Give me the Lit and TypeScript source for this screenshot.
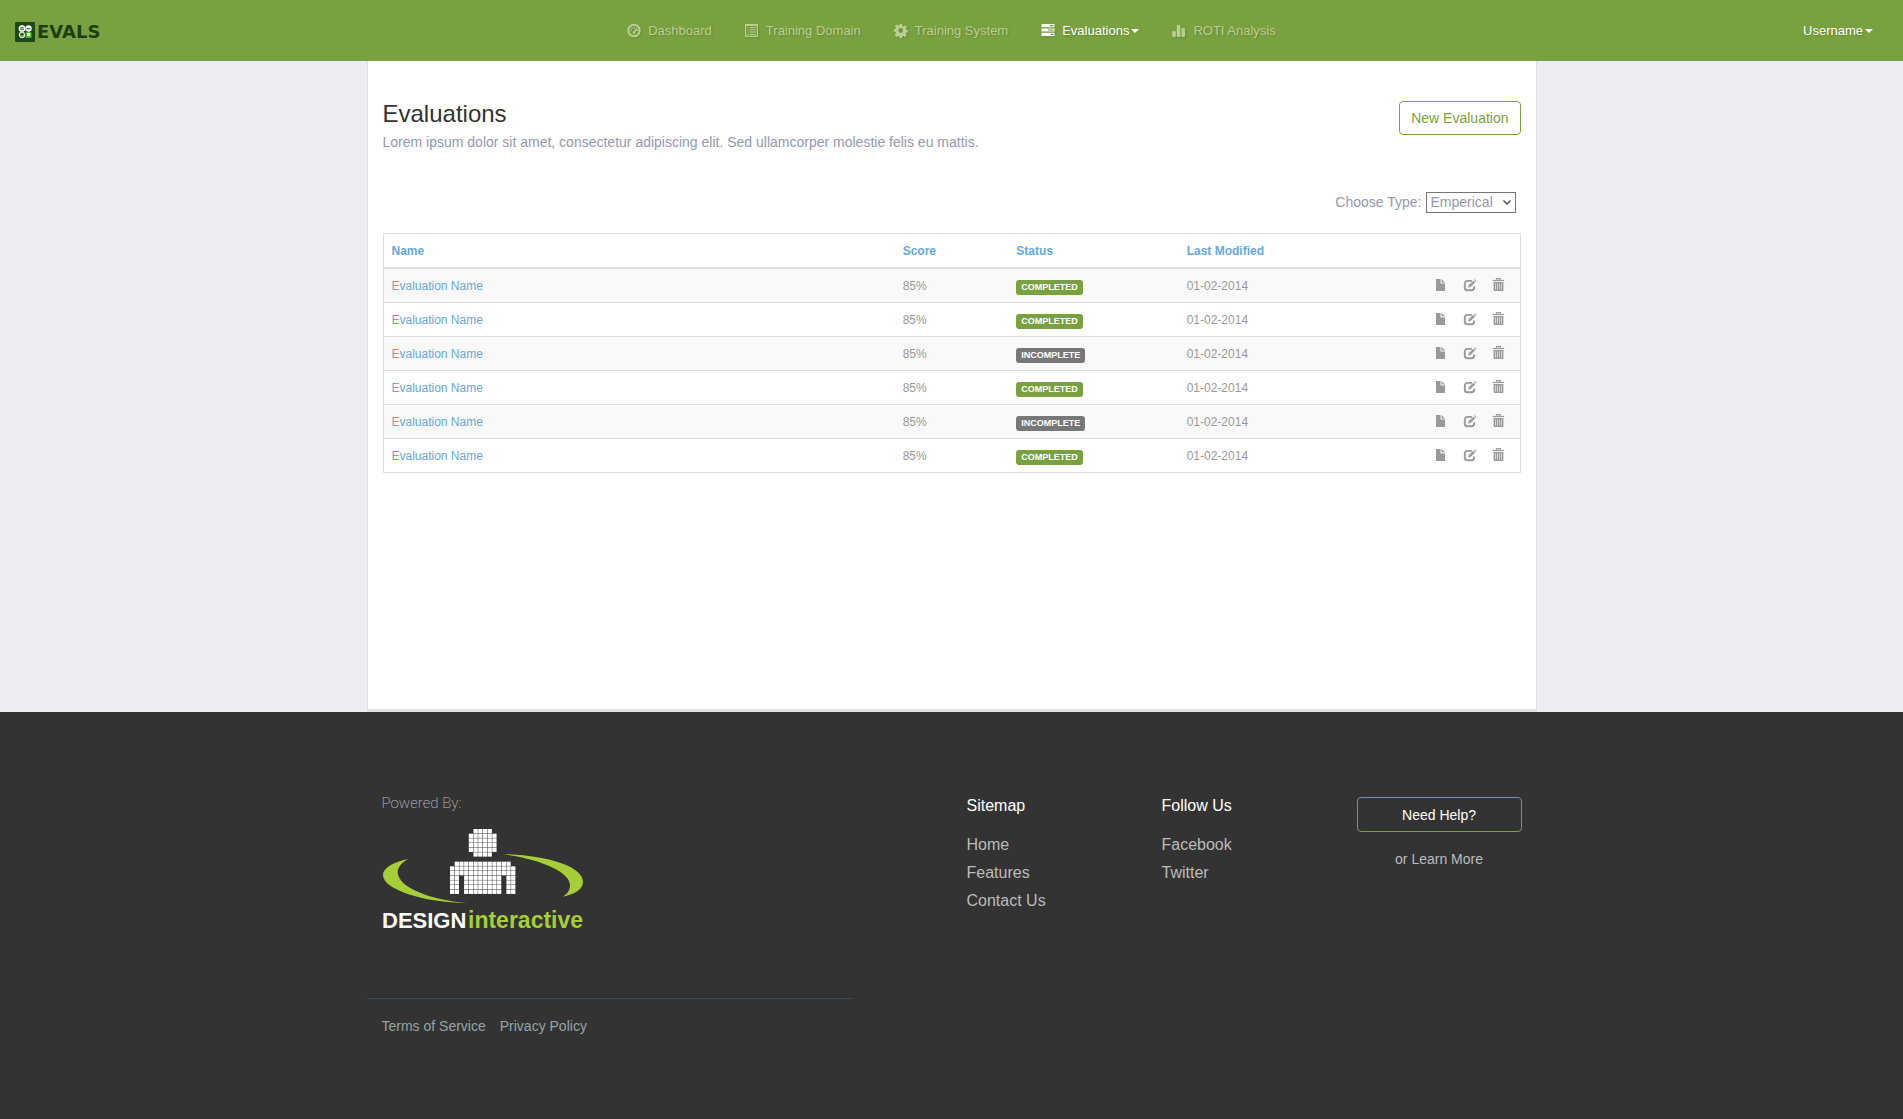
import { LitElement, html, css, svg } from "lit";
import { customElement } from "lit/decorators.js";

interface NavItem {
  label: string;
  icon: keyof typeof icons;
  active?: boolean;
}

interface Evaluation {
  name: string;
  score: string;
  complete: boolean;
  modified: string;
}

const icons = {
  dashboard: svg`
    <circle cx="7" cy="6.500" r="5.700" fill="none" stroke="currentColor" stroke-width="2" />
    <path d="M7.2 8.700 9.600 4.400" stroke="currentColor" stroke-width="1.200" fill="none" />
    <circle cx="7" cy="8.500" r="1.300" />
    <circle cx="3.900" cy="6.400" r=".8" /><circle cx="5" cy="4.200" r=".8" />
    <circle cx="7.400" cy="3.400" r=".8" /><circle cx="10.200" cy="6.400" r=".8" />`,
  list: svg`
    <path fill-rule="evenodd" d="M0 0h13v13H0zM1.200 2v9.800h10.600V2z" />
    <path d="M2.500 3h1v1h-1zM4.500 3H11v1H4.500zM2.500 5.300h1v1h-1zM4.500 5.300H11v1H4.500zM2.500 7.600h1v1h-1zM4.500 7.600H11v1H4.500zM2.500 9.900h1v1h-1zM4.500 9.900H11v1H4.500z" />`,
  cog: svg`
    <path fill-rule="evenodd" d="M5.600 0h2.400l.4 1.900 1.100.5 1.700-1.100 1.600 1.700-1.100 1.600.5 1.100 1.600.4v2.200l-1.800.4-.5 1.100 1.100 1.700-1.600 1.600-1.600-1.100-1.100.5-.4 1.800H5.600l-.4-1.800-1.100-.5-1.700 1.100L.9 10.500 2 8.900 1.500 7.800-.2 7.400V5.200l1.700-.4L2 3.700.9 2 2.400.5l1.700 1.100L5.200 1.300zM6.800 4.100a2.400 2.400 0 1 0 0 4.800 2.400 2.400 0 0 0 0-4.800z" />`,
  tasks: svg`
    <path fill-rule="evenodd" d="M.5 0h13v3.200H.5zM8.800 1v1.200h3.700V1zM.5 4.400h13v3.200H.5zM7 5.400v1.200h5.500V5.400zM.5 8.800h13V12H.5zM9.800 9.800V11h2.700V9.800z" />`,
  stats: svg`
    <rect x=".2" y="7" width="3.600" height="6" rx="1" />
    <rect x="4.800" y="1" width="3.600" height="12" rx="1" />
    <rect x="9.400" y="4" width="3.600" height="9" rx="1" />`,
  file: svg`<path d="M2 1h4.500v4.500H11V13H2zM7.500 1 11 4.500H7.500z" />`,
  edit: svg`
    <path d="M9 2.900H4.500A2.700 2.700 0 0 0 1.800 5.600v4A2.700 2.700 0 0 0 4.500 12.200h4a2.700 2.700 0 0 0 2.700-2.700V8.600" fill="none" stroke="currentColor" stroke-width="1.900" />
    <path d="M5.200 9.700 5.700 7.300 10.300 2.700 12.100 4.500 7.500 9.100zM11 2l.8-.8 1.800 1.800-.8.8z" />`,
  trash: svg`
    <path d="M4.500 1.800V.6h4v1.200" fill="none" stroke="currentColor" stroke-width="1.100" />
    <path d="M.8 1.900h11.400v1.200H.8z" />
    <path fill-rule="evenodd" d="M1.600 4h9.800v8a1 1 0 0 1-1 1H2.600a1 1 0 0 1-1-1zM3.200 5.200v6.600h.6V5.200zM5.300 5.200v6.600h.6V5.200zM7.300 5.200v6.600h.6V5.200zM9.300 5.200v6.600h.6V5.200z" />`,
};

const icon = (name: keyof typeof icons) => html`
  <svg class="icon" viewBox="0 0 14 14" width="14" height="14" fill="currentColor" aria-hidden="true">${icons[name]}</svg>
`;

/* Filled cells of the pixel figure, one string per row. */
const head = ["     ####     ", "    ######    ", "    ######    ", "    ######    ", "    ######    ", "     ####     "];
const body = [
  " ############ ",
  "##############",
  "##############",
  "## ######## ##",
  "## ######## ##",
  "## ######## ##",
  "## ######## ##",
];

const cells = (rows: string[], top: number) =>
  rows.flatMap((row, r) =>
    [...row].map((cell, c) =>
      cell === "#"
        ? svg`<rect x=${204 + c * 14.1} y=${top + r * 14} width="12.800" height="12.800" />`
        : null
    )
  );

@customElement("app-root")
export class AppRoot extends LitElement {
  static styles = css`
    :host {
      display: flex;
      flex-direction: column;
      min-height: 100vh;
      background: #ebedf2;
      color: #9499b0;
      font: 14px/20px "Liberation Sans", Arial, sans-serif;
    }
    * { box-sizing: border-box; }
    a { color: inherit; text-decoration: none; }
    h1, h2, p, ul { margin: 0; padding: 0; font-weight: 400; }
    ul { list-style: none; }
    .icon { display: block; overflow: visible; flex: none; }

    .topbar {
      display: grid;
      grid-template-columns: 1fr auto 1fr;
      align-items: center;
      min-height: 61px;
      padding: 0 15px;
      background: #7aa140;
      color: #b9d093;
      font-size: 13px;
      text-shadow: 1px 1px 2px rgba(0, 0, 0, 0.2);
    }
    .brand { justify-self: start; display: block; padding-top: 3px; text-shadow: none; }
    .brand svg { display: block; }
    .brand text { font: 700 18px "DejaVu Sans", sans-serif; fill: #1e3f14; }
    .nav { display: flex; gap: 33px; }
    .nav a, .user { display: flex; align-items: center; }
    .nav .icon { margin-right: 7px; filter: drop-shadow(1px 1px 1px rgba(0, 0, 0, 0.15)); }
    .active, .user { color: #fff; }
    .user { justify-self: end; padding: 0 15px; border: 0; background: none; font: inherit; text-shadow: inherit; }
    .caret { margin-left: 2px; border: 4px solid transparent; border-top-color: currentColor; border-bottom: 0; }

    .container { width: 100%; max-width: 1170px; margin: 0 auto; }
    .panel {
      flex: 1;
      padding: 40px 15px;
      background: #fff;
      border: solid #e1e2e6;
      border-width: 0 1px 3px;
    }
    .heading { display: flex; justify-content: space-between; align-items: flex-start; }
    .heading h1 { margin-bottom: 5px; color: #333; font-size: 24px; line-height: 26px; }
    .button {
      padding: 6px 11px;
      border: 1px solid #7aa140;
      border-radius: 4px;
      background: none;
      color: #7aa140;
      font: inherit;
    }
    .filter { display: flex; justify-content: flex-end; gap: 4px; margin: 40px 5px 20px 0; }
    .picker { display: grid; align-items: center; }
    .picker select, .picker svg { grid-area: 1 / 1; }
    .picker svg { justify-self: end; margin-right: 5px; pointer-events: none; }
    .picker select {
      appearance: none;
      height: 21px;
      padding: 0 21px 1px 4px;
      border: 1px solid #767676;
      border-radius: 0;
      background: #fff;
      color: inherit;
      font: inherit;
      line-height: 18px;
    }

    .grid {
      width: 100%;
      border: 1px solid #ddd;
      border-spacing: 0;
      table-layout: fixed;
      color: #999;
      font-size: 12px;
      line-height: 17px;
      text-align: left;
    }
    .grid th, .grid td { padding: 9px 8px 7px; border-bottom: 1px solid #ddd; }
    .grid th { border-bottom-width: 2px; color: #66a8de; }
    .grid tbody tr:nth-child(odd) { background: #f9f9f9; }
    .grid tbody tr:last-child td { border-bottom: 0; }
    .grid td a { color: #66a8de; }
    .col-name { width: 45%; }
    .col-score { width: 10%; }
    .col-status { width: 15%; }
    .badge {
      display: block;
      width: fit-content;
      margin-top: 2px;
      padding: 0 5px;
      border-radius: 3px;
      background: #777;
      color: #fff;
      font-size: 9px;
      font-weight: 700;
      line-height: 15px;
    }
    .complete { background: #7aa140; }
    .actions { display: flex; justify-content: flex-end; align-items: flex-start; gap: 15px; height: 17px; padding-right: 6px; }
    .actions button { padding: 0; border: 0; background: none; color: #999; }

    .footer { padding: 85px 0 83px; background: #333; color: #bbb; }
    .columns { display: grid; grid-template-columns: 5fr 1fr 2fr 2fr 2fr; }
    .sponsor { padding-left: 15px; }
    .powered { color: #b5bbc2; font: 200 15px/12px Roboto, sans-serif; }
    .logo { display: block; margin-top: 19px; }
    .logo text { font-family: "Liberation Sans", Arial, sans-serif; font-weight: 700; }
    .links { padding: 0 15px; font-size: 16px; line-height: 28px; }
    .links h2 { margin-bottom: 16px; color: #fff; font-size: 16px; line-height: 18px; }
    .help { padding: 0 15px; text-align: center; }
    .help .button { width: 100%; margin-bottom: 17px; padding: 7px 11px 6px; color: #fff; }
    .legal {
      display: flex;
      gap: 14px;
      width: 41.66%;
      margin-top: 64px;
      padding: 17px 15px 0;
      border-top: 1px solid #34495e;
      color: #95a5a6;
    }
  `;

  private nav: NavItem[] = [
    { label: "Dashboard", icon: "dashboard" },
    { label: "Training Domain", icon: "list" },
    { label: "Training System", icon: "cog" },
    { label: "Evaluations", icon: "tasks", active: true },
    { label: "ROTI Analysis", icon: "stats" },
  ];

  private rows: Evaluation[] = [true, true, false, true, false, true].map((complete) => ({
    name: "Evaluation Name",
    score: "85%",
    complete,
    modified: "01-02-2014",
  }));

  render() {
    return html`
      <header class="topbar">
        <a class="brand" href="#">
          <svg width="92" height="20" viewBox="0 0 92 20">
            <rect width="20" height="20" rx="1" fill="#1c4716" />
            <circle cx="7" cy="6.500" r="2.600" fill="none" stroke="#fff" stroke-width="1.500" />
            <path d="M7 3v7M3.500 6.500h7" stroke="#fff" stroke-width=".5" />
            <circle cx="13.500" cy="6.500" r="3.200" fill="#fff" />
            <path d="M11.500 6.800h4" stroke="#1c4716" stroke-width="1" />
            <circle cx="7" cy="13" r="2.600" fill="none" stroke="#d5e3cd" stroke-width="1.300" />
            <path d="M5 14h4" stroke="#d5e3cd" stroke-width="1" />
            <rect x="10.500" y="10" width="6" height="6" rx="1.500" fill="#4fc02c" />
            <rect x="12" y="11" width="3" height="3" fill="#fff" />
            <text x="22" y="16">EVALS</text>
          </svg>
        </a>
        <nav class="nav">
          ${this.nav.map(
            (item) => html`
              <a href="#" class=${item.active ? "active" : ""}>
                ${icon(item.icon)}${item.label}${item.active ? html`<span class="caret"></span>` : null}
              </a>
            `
          )}
        </nav>
        <button class="user" type="button">Username<span class="caret"></span></button>
      </header>

      <main class="container panel">
        <div class="heading">
          <div>
            <h1>Evaluations</h1>
            <p>Lorem ipsum dolor sit amet, consectetur adipiscing elit. Sed ullamcorper molestie felis eu mattis.</p>
          </div>
          <button class="button" type="button">New Evaluation</button>
        </div>

        <div class="filter">
          <label for="type">Choose Type:</label>
          <div class="picker">
            <select id="type"><option>Emperical</option></select>
            <svg width="8" height="5" viewBox="0 0 8 5" aria-hidden="true">
              <path d="M.5.5 4 4 7.500.5" fill="none" stroke="#444" stroke-width="1.300" />
            </svg>
          </div>
        </div>

        <table class="grid">
          <thead>
            <tr>
              <th class="col-name">Name</th>
              <th class="col-score">Score</th>
              <th class="col-status">Status</th>
              <th>Last Modified</th>
              <th></th>
            </tr>
          </thead>
          <tbody>
            ${this.rows.map(
              (row) => html`
                <tr>
                  <td><a href="#">${row.name}</a></td>
                  <td>${row.score}</td>
                  <td><span class="badge ${row.complete ? "complete" : ""}">${row.complete ? "COMPLETED" : "INCOMPLETE"}</span></td>
                  <td>${row.modified}</td>
                  <td>
                    <div class="actions">
                      <button type="button" aria-label="View">${icon("file")}</button>
                      <button type="button" aria-label="Edit">${icon("edit")}</button>
                      <button type="button" aria-label="Delete">${icon("trash")}</button>
                    </div>
                  </td>
                </tr>
              `
            )}
          </tbody>
        </table>
      </main>

      <footer class="footer">
        <div class="container">
          <div class="columns">
            <div class="sponsor">
              <p class="powered">Powered By:</p>
              <svg class="logo" width="204" height="106" viewBox="0 0 612 318">
                <g fill="#fff">${cells(head, 3)}${cells(body, 101)}</g>
                <g fill="#a6ce39">
                  <path d="M79 93C30 103 3 121 3 141C3 186 130 224 254 225C145 216 47 178 47 132C47 118 60 103 79 93Z" />
                  <path d="M358 78C494 81 603 114 603 162C603 185 575 200 542 206C558 197 564 186 564 171C564 132 475 92 358 78Z" />
                </g>
                <text x="0" y="299" font-size="66" fill="#fff">DESIGN</text>
                <text x="258" y="299" font-size="69" fill="#a6ce39">interactive</text>
              </svg>
            </div>
            <div></div>
            <nav class="links">
              <h2>Sitemap</h2>
              <ul>
                <li><a href="#">Home</a></li>
                <li><a href="#">Features</a></li>
                <li><a href="#">Contact Us</a></li>
              </ul>
            </nav>
            <nav class="links">
              <h2>Follow Us</h2>
              <ul>
                <li><a href="#">Facebook</a></li>
                <li><a href="#">Twitter</a></li>
              </ul>
            </nav>
            <div class="help">
              <button class="button" type="button">Need Help?</button>
              <p>or <a href="#">Learn More</a></p>
            </div>
          </div>
          <div class="legal">
            <a href="#">Terms of Service</a>
            <a href="#">Privacy Policy</a>
          </div>
        </div>
      </footer>
    `;
  }
}
